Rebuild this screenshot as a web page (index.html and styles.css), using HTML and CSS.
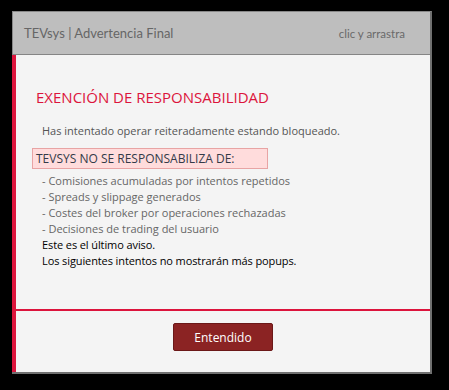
FILE: index.html
```html
<!DOCTYPE html>
<html lang="es">
<head>
  <meta charset="UTF-8">
  <meta name="viewport" content="width=device-width, initial-scale=1.0">
  <title>TEVsys | Advertencia Final</title>
  <link rel="stylesheet" href="styles.css">
</head>
<body>

  <div class="window">
    <div class="titlebar">
      <span class="title">TEVsys | Advertencia Final</span>
      <span class="drag">clic y arrastra</span>
    </div>

    <div class="panel">
      <div class="content">
        <h2>EXENCIÓN DE RESPONSABILIDAD</h2>
        <p class="intro">Has intentado operar reiteradamente estando bloqueado.</p>
        <div class="notice">TEVSYS NO SE RESPONSABILIZA DE:</div>
        <ul class="items">
          <li>- Comisiones acumuladas por intentos repetidos</li>
          <li>- Spreads y slippage generados</li>
          <li>- Costes del broker por operaciones rechazadas</li>
          <li>- Decisiones de trading del usuario</li>
        </ul>
        <p class="final">Este es el último aviso.</p>
        <p class="final">Los siguientes intentos no mostrarán más popups.</p>
      </div>
      <div class="footer">
        <button type="button" class="btn-ok">Entendido</button>
      </div>
    </div>
  </div>

</body>
</html>
```

FILE: styles.css
```css
body {
    margin: 0;
    background-color: #000;
    font-family: "Open Sans", "Noto Sans", sans-serif;
}
.window {
    width: 418px;
    margin: 11px 0 0 12px;
    border-top: 1px solid #888;
    border-right: 2px solid #707070;
    border-bottom: 2px solid #707070;
    background-color: #f4f4f4;
}
.titlebar {
    display: flex;
    justify-content: space-between;
    align-items: center;
    height: 42px;
    padding: 0 25px 0 11px;
    background-color: #bebebe;
    border-bottom: 1px solid #858585;
    border-left: 1px solid #888;
    font-family: Lato, "Open Sans", sans-serif;
}
.title {
    font-size: 13px;
    color: #666;
}
.drag {
    font-size: 11.5px;
    color: #6a6a6a;
}
.panel {
    border-left: 4px solid #dc143c;
}
.content {
    height: 254px;
    padding: 32px 0 0 20px;
    box-sizing: border-box;
}
.content h2 {
    margin: 0 0 16px 0;
    font-size: 15px;
    font-weight: normal;
    color: #dc143c;
}
.intro {
    margin: 0 0 10px 6px;
    font-size: 11px;
    color: #555;
}
.notice {
    width: 228px;
    margin-left: -4px;
    padding: 1px 3px;
    background-color: #ffdcdc;
    border: 1px solid #e8a4a4;
    font-size: 12px;
    color: #333a48;
}
.items {
    list-style: none;
    margin: 4px 0 0 6px;
    padding: 0;
    font-size: 11px;
    line-height: 16px;
    color: #666;
}
.final {
    margin: 0 0 0 6px;
    font-size: 11px;
    line-height: 16px;
    letter-spacing: -0.1px;
    color: #000;
}
.footer {
    display: flex;
    justify-content: center;
    padding: 12px 0 21px 0;
    border-top: 2px solid #dc143c;
}
.btn-ok {
    width: 100px;
    height: 28px;
    background-color: #8b2323;
    border: 1px solid #6b1818;
    border-radius: 2px;
    color: #fff;
    font-family: inherit;
    font-size: 12px;
    cursor: pointer;
}
```
